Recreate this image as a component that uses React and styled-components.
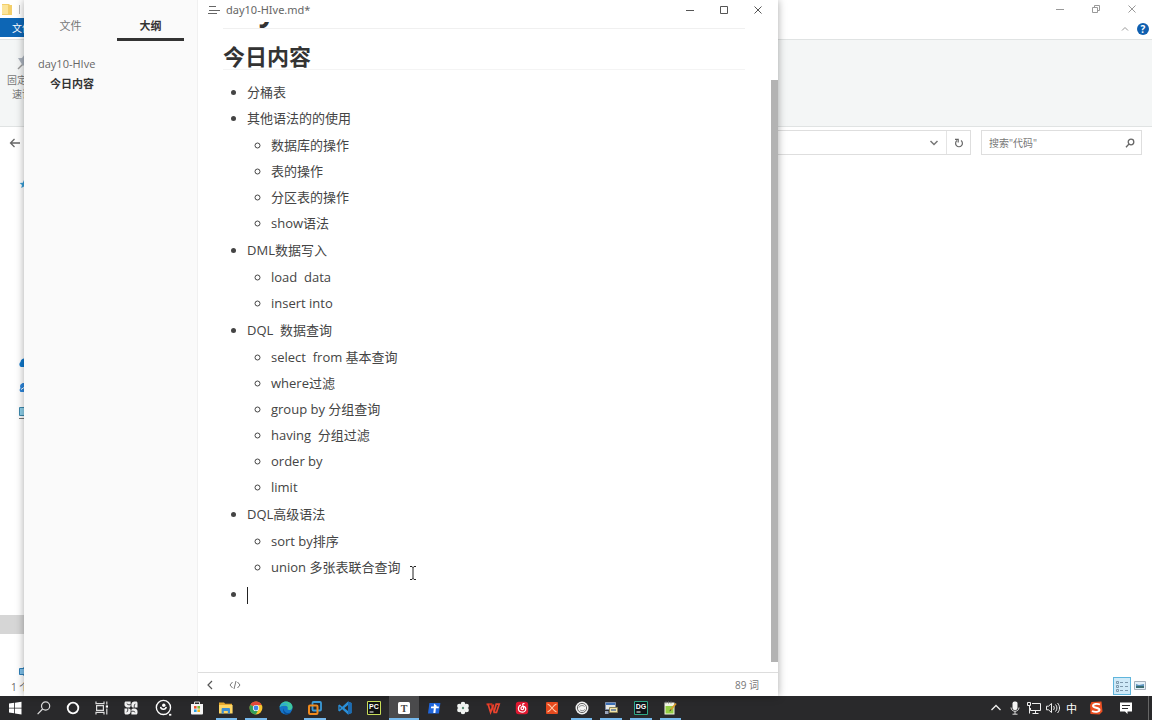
import React from 'react';
import styled, { createGlobalStyle } from 'styled-components';


const outline = [
    { text: '分桶表' },
    { text: '其他语法的的使用', children: ['数据库的操作', '表的操作', '分区表的操作', 'show语法'] },
    { text: 'DML数据写入', children: ['load  data', 'insert into'] },
    {
        text: 'DQL  数据查询',
        children: ['select  from 基本查询', 'where过滤', 'group by 分组查询', 'having  分组过滤', 'order by', 'limit']
    },
    { text: 'DQL高级语法', children: ['sort by排序', 'union 多张表联合查询'] },
];

// Iconos de la barra de tareas
const Icon = ({ children, size = 16 }) => (
    <svg width={size} height={size} viewBox="0 0 16 16" fill="none" aria-hidden="true">{children}</svg>
);

const systemApps = [
    {
        name: 'Start',
        icon: <Icon><path fill="#fff" d="M2 3.6l5.2-.8v4.9H2zM8 2.7l6.5-1v6H8zM2 8.5h5.2v4.8L2 12.6zM8 8.5h6.5v6L8 13.5z" /></Icon>
    },
    {
        name: 'Search',
        icon: <Icon><g stroke="#ddd" strokeWidth="1.2"><circle cx="9.6" cy="6" r="4.1" /><path d="M6.6 9L1.6 14.2" /></g></Icon>
    },
    {
        name: 'Cortana',
        icon: <Icon><circle cx="8" cy="8" r="5.3" stroke="#fff" strokeWidth="1.8" /></Icon>
    },
    {
        name: 'Task view',
        icon: (
            <Icon>
                <g stroke="#ddd" strokeWidth="1.2">
                    <path d="M2 1.6v2h8v-2M2 14.4v-2h8v2M2.6 5.6h6.8v4.8H2.6zM12.8 1.6v3M12.8 8.6v5.8" />
                </g>
                <path fill="#fff" d="M11.8 5.4h2.2v2.2h-2.2z" />
            </Icon>
        )
    },
    {
        name: 'Widgets',
        icon: (
            <Icon>
                <g fill="#f2f2f2">
                    <path d="M1.5 3c0-.9.6-1.500 1.500-1.500h4.600v4.300c0 1-.8 1.800-1.800 1.800H4.500c-1.800 0-3-1.400-3-3z" />
                    <path d="M13 1.500c.9 0 1.500.6 1.500 1.500v4.600h-4.300c-1 0-1.800-.8-1.800-1.800V4.500c0-1.800 1.400-3 3-3z" />
                    <path d="M3 14.500c-.9 0-1.500-.6-1.500-1.500V8.400h4.300c1 0 1.800.8 1.800 1.800v1.300c0 1.800-1.400 3-3 3z" />
                    <path d="M14.500 13c0 .9-.6 1.500-1.500 1.500H8.400v-4.300c0-1 .8-1.800 1.800-1.800h1.300c1.800 0 3 1.400 3 3z" />
                </g>
                <path d="M3.800 3.600c1 1.200 2.400 1.400 3.800.9M12.400 3.800c-1.200 1-1.400 2.400-.9 3.800M12.200 12.400c-1-1.200-2.400-1.400-3.800-.9M3.600 12.200c1.200-1 1.400-2.400.9-3.800" stroke="#2a2a2c" />
            </Icon>
        )
    },
];

const pinnedApps = [
    {
        name: 'Store',
        icon: (
            <Icon>
                <path d="M5.5 4V2h5v2" stroke="#ddd" />
                <path fill="#f4f4f4" d="M2 4h12v9.5a1 1 0 0 1-1 1H3a1 1 0 0 1-1-1z" />
                <path fill="#e8502d" d="M5 6h2.6v2.6H5z" /><path fill="#7cb82f" d="M8.4 6H11v2.6H8.4z" />
                <path fill="#2aa3e4" d="M5 9.4h2.6V12H5z" /><path fill="#f5b51b" d="M8.4 9.4H11V12H8.4z" />
            </Icon>
        )
    },
    {
        name: 'Explorer', running: true,
        icon: (
            <Icon>
                <path fill="#e6a92f" d="M1 2.5h5l1.2 1.3H14v3H1z" />
                <path fill="#ffd766" d="M1 5h13.6v8.5H1z" />
                <path fill="#3f8fd2" d="M3.6 13.5V9.2c0-.7.5-1.2 1.2-1.2h6c.7 0 1.2.5 1.2 1.2v4.3H9.8v-2.4h-4v2.4z" />
            </Icon>
        )
    },
    {
        name: 'Chrome', running: true,
        icon: (
            <Icon>
                <circle cx="8" cy="8" r="6.4" fill="#f7c530" />
                <path fill="#e2493b" d="M8 8L2.4 4.8A6.4 6.4 0 0 1 13.6 4.9H8z" />
                <path fill="#34a05a" d="M2.4 4.8A6.4 6.4 0 0 0 7.8 14.4L10.6 9.6 8 8z" />
                <circle cx="8" cy="8" r="3.1" fill="#fff" /><circle cx="8" cy="8" r="2.4" fill="#4285e8" />
            </Icon>
        )
    },
    {
        name: 'Edge',
        icon: (
            <Icon>
                <circle cx="8" cy="8" r="6.5" fill="#1474c8" />
                <path fill="#3dc7a0" d="M1.6 7.2C2.2 3.8 4.8 1.5 8 1.5c3.8 0 6.5 2.5 6.5 5.4 0 2-1.5 3.1-3.3 3.1-1.3 0-2-.5-1.6-1.2.8-1.6-.4-3.1-2.3-3.1-2.4 0-4.3.4-5.7 1.5z" />
                <path fill="#2ba6df" d="M1.6 7.2C2.4 4.4 4.6 3 7 3.2c2 .1 3 1.200 3 2.200C8.200 3.800 4 4.800 1.600 7.200z" />
                <path fill="#0b4f96" d="M5.800 8.200c-.3 2.600 1.400 4.800 4.500 4.800 1.200 0 2.200-.3 3-.8-1.200 1.600-3 2.300-5.300 2.300-2.400-.8-3.500-3.800-2.200-6.300z" />
            </Icon>
        )
    },
    {
        name: 'VMware', running: true,
        icon: (
            <Icon>
                <rect x="5.5" y="2" width="8.500" height="8.500" rx="1" stroke="#3b9bd8" strokeWidth="1.800" />
                <rect x="2" y="5.500" width="8.500" height="8.500" rx="1" stroke="#f08a1d" strokeWidth="2" />
            </Icon>
        )
    },
    {
        name: 'VS Code',
        icon: (
            <Icon>
                <path fill="#2a8fd8" d="M11 1.400l3.600 1.700v9.800L11 14.600 5.200 9.300 2.500 11.400 1.300 10.700V5.300l1.200-.7 2.700 2.100zM11 5L7.300 8 11 11zM2.600 6.600v2.800L4 8z" />
                <path fill="#1c6cb4" d="M11 1.400l3.600 1.700v9.800L11 14.600z" />
            </Icon>
        )
    },
    {
        name: 'PyCharm',
        icon: (
            <Icon>
                <path fill="#111" stroke="#c8dd58" d="M1.500 1.500h13v13h-13z" />
                <text x="3" y="8.600" fontFamily="Liberation Sans, sans-serif" fontSize="7" fontWeight="700" fill="#fff">PC</text>
                <path d="M3.500 12h4" stroke="#fff" />
            </Icon>
        )
    },
    {
        name: 'Typora', running: true, active: true,
        icon: (
            <Icon>
                <rect x="2" y="2" width="12" height="12" rx="1.500" fill="#fff" />
                <text x="8" y="11.500" textAnchor="middle" fontFamily="Liberation Serif, serif" fontSize="10" fontWeight="700" fill="#444">T</text>
            </Icon>
        )
    },
    {
        name: 'Teambition',
        icon: (
            <Icon>
                <path fill="#1f66dd" d="M3.400 3h11l-1.500 10.500H2z" />
                <path fill="#fff" d="M8 3.400l2.600 2v1.200h2.200v1.700H9.900l-.5 4.700H7.300l.5-4.700H4.900l.3-1.700h2.600z" />
            </Icon>
        )
    },
    {
        name: 'Flower',
        icon: (
            <Icon>
                <g fill="#f2f5f3">
                    <circle cx="8" cy="4" r="2.300" /><circle cx="11.600" cy="6" r="2.300" /><circle cx="11.600" cy="10" r="2.300" />
                    <circle cx="8" cy="12" r="2.300" /><circle cx="4.400" cy="10" r="2.300" /><circle cx="4.400" cy="6" r="2.300" />
                    <circle cx="8" cy="8" r="3" />
                </g>
                <circle cx="8" cy="8" r="1.200" fill="#5a8c74" />
            </Icon>
        )
    },
    {
        name: 'WPS',
        icon: (
            <Icon>
                <path d="M1.500 4.200h5L9 11.500" stroke="#c9301f" strokeWidth="2" />
                <path d="M3 4l2.600 8.400L8.600 4.500M8.800 12.400L11.200 4.200h3L11.500 12.400H8.400" stroke="#e8442f" strokeWidth="1.700" />
            </Icon>
        )
    },
    {
        name: 'Music',
        icon: (
            <Icon>
                <rect x="1.800" y="1.800" width="12.400" height="12.400" rx="3" fill="#e01830" />
                <path d="M10.500 3.600c-1.200-.4-2 .3-1.700 1.400l.8 3c.4 2-2.600 2.200-2.600.2 0-2.600 4.800-2.400 4.800.8 0 4.200-7.400 4.200-7.400-.4C4.400 6.800 5.400 5.500 7 5" stroke="#fff" strokeWidth="1.200" />
            </Icon>
        )
    },
    {
        name: 'XMind',
        icon: (
            <Icon>
                <rect x="2" y="2" width="12" height="12" rx="1" fill="#e64a1e" />
                <path d="M3.500 4C7 5 9 11 12.500 12M12.500 4C9 5 7 11 3.500 12" stroke="#ffc9a8" strokeWidth="1.200" />
            </Icon>
        )
    },
    {
        name: 'OBS', running: true,
        icon: (
            <Icon>
                <circle cx="8" cy="8" r="6.500" fill="#f3f3f3" />
                <circle cx="8" cy="8" r="4.600" stroke="#555" strokeWidth=".9" />
                <path d="M5 7.500C5.500 5.500 9 4.800 10.500 6.500M10.800 9.500c-1.400 1.600-3.500 1.500-4.600.500" stroke="#666" strokeWidth=".8" />
            </Icon>
        )
    },
    {
        name: 'Remote', running: true,
        icon: (
            <Icon>
                <path fill="#e8e8e2" stroke="#7d8da8" d="M2.500 2.500h10v7h-10z" /><path d="M3 4h9" stroke="#3c6fb5" strokeWidth="2" />
                <path fill="#f0e3a8" stroke="#8c8457" d="M6.500 7.500h8v5h-8z" /><path d="M8 10h5" stroke="#55719a" strokeWidth="1.500" />
                <path fill="#98a4b8" d="M2 11h3.500v3H2z" />
            </Icon>
        )
    },
    {
        name: 'DataGrip', running: true,
        icon: (
            <Icon>
                <path fill="#101418" stroke="#2fa987" d="M1.500 1.500h13v13h-13z" />
                <text x="2.700" y="8.600" fontFamily="Liberation Sans, sans-serif" fontSize="7" fontWeight="700" fill="#fff">DG</text>
                <path d="M3.500 12h4" stroke="#fff" />
            </Icon>
        )
    },
    {
        name: 'Notepad++', running: true,
        icon: (
            <Icon>
                <path fill="#f1f4e4" d="M2.500 2.500h10v12h-10z" /><path fill="#94cf45" d="M3.500 6h8v7.500h-8z" />
                <path d="M4 1.500v2M6.500 1.500v2M9 1.500v2" stroke="#777" />
                <path d="M14 3.500L8.500 10" stroke="#d79a2c" strokeWidth="1.800" /><path d="M8.800 9.500L7.800 11.200" stroke="#333" />
            </Icon>
        )
    },
];

const trayItems = [
    { name: 'Hidden icons', icon: <Icon><path d="M3.500 10L8 5.500l4.500 4.500" stroke="#eee" strokeWidth="1.300" /></Icon> },
    {
        name: 'Microphone',
        icon: <Icon><rect x="5.500" y="1.500" width="5" height="8.500" rx="2" fill="#f3f3f3" /><path d="M4 7.500c0 5 8 5 8 0M8 11v3M5.500 14.200h5" stroke="#ddd" /></Icon>
    },
    {
        name: 'Network',
        icon: <Icon><path d="M6 3.500h8.500v7H4.500V8M9.500 10.500v3M6.500 13.500h6M1.500 2.500h3v3h-3zM3.500 5.500v8" stroke="#eee" /></Icon>
    },
    {
        name: 'Volume',
        icon: <Icon><path d="M1.500 6.200h2L6.500 3.500v9L3.500 9.800h-2zM8.500 6c1 1.200 1 2.800 0 4M10.500 4.500c1.900 2 1.900 5 0 7M12.500 3c2.700 3 2.700 7 0 10" stroke="#eee" /></Icon>
    },
];

const Win = ({ kind, color = '#555' }) => (
    <svg width="12" height="12" viewBox="0 0 12 12" fill="none" stroke={color} aria-hidden="true">
        {kind === 'min' && <path d="M2 6.500h8" />}
        {kind === 'max' && <path d="M2.500 2.500h7v7h-7z" />}
        {kind === 'restore' && <path d="M2.500 4.500h5v5h-5zM4.500 4.500v-2h5v5h-2" />}
        {kind === 'close' && <path d="M2.500 2.500l7 7M9.500 2.500l-7 7" />}
    </svg>
);


const App = () => (
    <>
        <GlobalStyle />
        <Desktop>
            <Screen>
                <Explorer>
                    <TitleBar>
                        <svg width="12" height="12" viewBox="0 0 12 12" aria-hidden="true">
                            <path fill="#f3cf6b" d="M1 1h7l1 1h2v10H1z" /><path fill="#fbe49a" d="M1 2h6v9H1z" />
                        </svg>
                        <Divider />
                        <WindowButtons $gap="24px">
                            <PlainButton aria-label="Minimize"><Win kind="min" color="#999" /></PlainButton>
                            <PlainButton aria-label="Restore"><Win kind="restore" color="#999" /></PlainButton>
                            <PlainButton aria-label="Close"><Win kind="close" color="#999" /></PlainButton>
                        </WindowButtons>
                    </TitleBar>
                    <RibbonTabs>
                        <FileTab>文件</FileTab>
                        <RibbonHelp>
                            <PlainButton aria-label="Collapse">
                                <svg width="8" height="6" viewBox="0 0 8 6" fill="none" stroke="#999" aria-hidden="true"><path d="M1 4.500l3-3 3 3" /></svg>
                            </PlainButton>
                            <HelpButton>?</HelpButton>
                        </RibbonHelp>
                    </RibbonTabs>
                    <Ribbon>
                        <PinButton>
                            <svg width="20" height="18" viewBox="0 0 20 18" fill="none" aria-hidden="true">
                                <path d="M1 16l5-5" stroke="#999" strokeWidth="1.500" />
                                <path d="M1 5l5 8 4-4 4-1-6-7-3 4z" fill="#aab2bd" />
                            </svg>
                            <span>固定到快<br />速访问</span>
                        </PinButton>
                    </Ribbon>
                    <AddressRow>
                        <PlainButton aria-label="Back">
                            <svg width="12" height="10" viewBox="0 0 12 10" fill="none" stroke="#666" strokeWidth="1.300" aria-hidden="true"><path d="M11 5H1.500M5.500 1l-4 4 4 4" /></svg>
                        </PlainButton>
                        <AddressBox>
                            <PlainButton aria-label="History">
                                <svg width="10" height="8" viewBox="0 0 10 8" fill="none" stroke="#777" strokeWidth="1.500" aria-hidden="true"><path d="M1.500 2L5 5.500 8.500 2" /></svg>
                            </PlainButton>
                            <RefreshButton aria-label="Refresh">
                                <svg width="10" height="10" viewBox="0 0 10 10" fill="none" stroke="#666" strokeWidth="1.200" aria-hidden="true"><path d="M7 2.600A3.400 3.400 0 1 1 3 2.600M1 1.300h3.200v3.200" /></svg>
                            </RefreshButton>
                        </AddressBox>
                        <SearchBox>
                            <input aria-label="搜索" placeholder={'搜索"代码"'} />
                            <svg width="10" height="10" viewBox="0 0 10 10" fill="none" stroke="#666" strokeWidth="1.300" aria-hidden="true"><circle cx="6" cy="4" r="2.800" /><path d="M4 6L1 9.200" /></svg>
                        </SearchBox>
                    </AddressRow>
                    <NavPane>
                        <NavRow $top="16px">
                            <svg width="10" height="10" viewBox="0 0 10 10" aria-hidden="true"><path fill="#3a9fd8" d="M5 1l1.200 2.800L9.500 4 7 6l.8 3L5 7.400 2.200 9 3 6 .5 4l3.300-.2z" /></svg>
                        </NavRow>
                        <NavRow $top="160px">
                            <svg width="14" height="10" viewBox="0 0 14 10" aria-hidden="true"><path fill="#0f78cc" d="M2 9a3 3 0 0 1-.5-5A4 4 0 0 1 9 2.500 3.500 3.500 0 0 1 12 9z" /></svg>
                        </NavRow>
                        <NavRow $top="6px">
                            <svg width="14" height="10" viewBox="0 0 14 10" aria-hidden="true"><path fill="#2c86dc" d="M1.500 9a3 3 0 0 1 0-4A3 3 0 0 1 8 2 3.500 3.500 0 0 1 12 9z" /><path d="M2 6.500l3-2" stroke="#fff" /></svg>
                        </NavRow>
                        <NavRow $top="6px">
                            <svg width="14" height="12" viewBox="0 0 14 12" aria-hidden="true"><path fill="#8fd0ea" stroke="#3c88ad" d="M.5.5h13v8H.5z" /><path d="M0 11.500h14" stroke="#777" /></svg>
                        </NavRow>
                        <NavRow $top="193px" $selected />
                        <NavRow $top="28px">
                            <svg width="14" height="10" viewBox="0 0 14 10" aria-hidden="true"><path fill="#7fc0ea" stroke="#2f7fb8" d="M.5 1.500h8v6h-8zM4.500.5h9v8h-9" /></svg>
                        </NavRow>
                    </NavPane>
                    <ExplorerStatus>
                        <span>1 个项目</span>
                        <ViewButtons>
                            <ViewButton $selected aria-label="Details">
                                <svg width="14" height="14" viewBox="0 0 14 14" fill="none" aria-hidden="true">
                                    <path d="M1.500 2.500h2v2h-2zM1.500 6.500h2v2h-2zM1.500 10.500h2v2h-2zM5 3.500h3M5 7.500h3M5 11.500h3M10 3.500h3M10 7.500h3M10 11.500h3" stroke="#7d98ac" />
                                </svg>
                            </ViewButton>
                            <ViewButton aria-label="Large icons">
                                <svg width="12" height="10" viewBox="0 0 12 10" aria-hidden="true">
                                    <path fill="#e4f0f9" stroke="#a5b0bb" d="M.5.5h11v8H.5z" /><path fill="#5b93bd" d="M2 3l3 1 5-1v2H2z" /><path fill="#3b6d72" d="M2 5h8v2H2z" />
                                </svg>
                            </ViewButton>
                        </ViewButtons>
                    </ExplorerStatus>
                </Explorer>

                <Editor>
                    <Sidebar>
                        <Tabs>
                            <Tab>文件</Tab>
                            <Tab $active>大纲</Tab>
                        </Tabs>
                        <OutlineLink href="#day10">day10-HIve</OutlineLink>
                        <OutlineLink href="#today" $level={1}>今日内容</OutlineLink>
                    </Sidebar>
                    <Main>
                        <EditorTitle>
                            <PlainButton aria-label="Outline">
                                <svg width="12" height="10" viewBox="0 0 12 10" stroke="#666" aria-hidden="true"><path d="M1 1.500h7M1 5.500h11M0 8.500h9" /></svg>
                            </PlainButton>
                            <span>day10-HIve.md*</span>
                            <WindowButtons $gap="22px">
                                <PlainButton aria-label="Minimize"><Win kind="min" /></PlainButton>
                                <PlainButton aria-label="Maximize"><Win kind="max" /></PlainButton>
                                <PlainButton aria-label="Close"><Win kind="close" /></PlainButton>
                            </WindowButtons>
                        </EditorTitle>
                        <Scroller>
                            <Article>
                                <DocTitle id="day10">day10-HIve</DocTitle>
                                <Heading id="today">今日内容</Heading>
                                <List>
                                    {outline.map((item) => (
                                        <li key={item.text}>
                                            {item.text}
                                            {item.children && (
                                                <SubList>
                                                    {item.children.map((child) => <li key={child}>{child}</li>)}
                                                </SubList>
                                            )}
                                        </li>
                                    ))}
                                    <li><Caret /></li>
                                </List>
                            </Article>
                            <ScrollTrack><ScrollThumb /></ScrollTrack>
                        </Scroller>
                        <EditorStatus>
                            <PlainButton aria-label="Hide sidebar">
                                <svg width="8" height="10" viewBox="0 0 8 10" fill="none" stroke="#555" strokeWidth="1.200" aria-hidden="true"><path d="M6 1L2 5l4 4" /></svg>
                            </PlainButton>
                            <PlainButton aria-label="Source code">
                                <svg width="12" height="10" viewBox="0 0 12 10" fill="none" stroke="#777" aria-hidden="true"><path d="M3.500 2L1 5l2.500 3M8.500 2L11 5 8.500 8M7 1L5 9" /></svg>
                            </PlainButton>
                            <WordCount>89 词</WordCount>
                        </EditorStatus>
                    </Main>
                </Editor>

                <Pointer width="8" height="14" viewBox="0 0 8 14" fill="none" stroke="#222" aria-hidden="true">
                    <path d="M1 .5h2l1 1 1-1h2M4 1v12M1 13.500h2l1-1 1 1h2" />
                </Pointer>
            </Screen>

            <Taskbar>
                {systemApps.map((app) => <TaskButton key={app.name} aria-label={app.name}>{app.icon}</TaskButton>)}
                <TaskButton $wide aria-label="Quick search">
                    <Icon size={18}>
                        <circle cx="7.500" cy="7.500" r="6.300" stroke="#fff" strokeWidth="1.200" />
                        <path d="M12.500 14h2" stroke="#fff" strokeWidth="1.600" />
                        <path d="M5 7c.2 2.600 4.600 2.800 5 0" stroke="#fff" strokeWidth="1.300" />
                        <circle cx="7.800" cy="5.600" r="1.500" fill="#fff" />
                    </Icon>
                </TaskButton>
                <Pinned>
                    {pinnedApps.map((app) => (
                        <PinnedButton key={app.name} aria-label={app.name} $running={app.running} $active={app.active}>
                            {app.icon}
                        </PinnedButton>
                    ))}
                </Pinned>
                <Tray>
                    {trayItems.map((item) => <TrayButton key={item.name} aria-label={item.name}>{item.icon}</TrayButton>)}
                    <TrayButton>中</TrayButton>
                    <TrayButton $wide aria-label="Sogou">
                        <Icon>
                            <path fill="#ea4f22" d="M3.500 2l10-.5 1 10-3 3-9-.5L2 5z" />
                            <path d="M12 4.500C9 3.200 5 4 5 6s6.500 1.500 6.500 3.800S7 12.500 4 11" stroke="#fff" strokeWidth="1.900" />
                        </Icon>
                    </TrayButton>
                    <TrayButton $wide aria-label="Notifications">
                        <Icon><path fill="#fff" d="M2 2.500h12v9H9.500V14L7 11.500H2z" /><path d="M4 5.500h8M4 8.500h6" stroke="#2a2a2c" /></Icon>
                    </TrayButton>
                    <ShowDesktop aria-label="Show desktop" />
                </Tray>
            </Taskbar>
        </Desktop>
    </>
);

export default App;

const GlobalStyle = createGlobalStyle`
    body {
        margin: 0;
        background: #fff;
        font-family: 'Open Sans', 'Noto Sans CJK SC', sans-serif;
    }

    *, *::before, *::after {
        box-sizing: border-box;
    }

    button, input {
        font: inherit;
        color: inherit;
    }
`;

const Desktop = styled.div`
    display: flex;
    flex-direction: column;
    height: 100vh;
    overflow: hidden;
`;

const Screen = styled.div`
    position: relative;
    flex: 1;
    min-height: 0;
    display: flex;
`;

const PlainButton = styled.button`
    display: flex;
    align-items: center;
    justify-content: center;
    padding: 0;
    border: 0;
    background: none;
`;

const WindowButtons = styled.div`
    display: flex;
    gap: ${({ $gap }) => $gap};
    margin-left: auto;
`;

/* Explorador */
const Explorer = styled.section`
    flex: 1;
    display: flex;
    flex-direction: column;
    min-width: 0;
    background: #fff;
    color: #666;
    font-size: 10px;
`;

const TitleBar = styled.header`
    display: flex;
    align-items: center;
    gap: 6px;
    height: 18px;
    padding: 0 14px 0 1px;
`;

const Divider = styled.span`
    width: 1px;
    height: 9px;
    background: #bbb;
`;

const RibbonTabs = styled.div`
    display: flex;
    justify-content: space-between;
    height: 21px;
`;

const FileTab = styled.button`
    height: 19px;
    padding: 0 12px;
    border: 0;
    background: #0d66b5;
    color: #fff;
`;

const RibbonHelp = styled.div`
    display: flex;
    align-items: center;
    gap: 8px;
    padding-right: 3px;
`;

const HelpButton = styled.button`
    width: 12px;
    height: 12px;
    padding: 0;
    border: 0;
    border-radius: 50%;
    background: #0f5fb0;
    color: #fff;
    font-weight: 700;
    line-height: 12px;
`;

const Ribbon = styled.div`
    height: 88px;
    padding: 13px 7px;
    border: solid #e0e3e3;
    border-width: 1px 0;
    background: #f4f6f6;
`;

const PinButton = styled(PlainButton)`
    flex-direction: column;
    gap: 2px;
    line-height: 14px;
    color: #777;
`;

const AddressRow = styled.div`
    display: flex;
    gap: 10px;
    padding: 3px 10px 3px 9px;
`;

const AddressBox = styled.div`
    flex: 1;
    display: flex;
    justify-content: flex-end;
    gap: 7px;
    height: 25px;
    margin-left: 60px;
    border: 1px solid #dedede;
`;

const RefreshButton = styled(PlainButton)`
    width: 24px;
    border-left: 1px solid #e4e4e4;
`;

const SearchBox = styled.label`
    display: flex;
    align-items: center;
    width: 161px;
    height: 25px;
    padding: 0 6px 0 7px;
    border: 1px solid #dedede;

    input {
        flex: 1;
        min-width: 0;
        padding: 0;
        border: 0;
        outline: 0;
        background: none;
    }

    input::placeholder {
        color: #777;
    }
`;

const NavPane = styled.nav`
    flex: 1;
    min-height: 0;
    width: 120px;
`;

const NavRow = styled.div`
    display: flex;
    align-items: center;
    height: 19px;
    margin-top: ${({ $top }) => $top};
    padding-left: 19px;
    background: ${({ $selected }) => ($selected ? '#d6d6d6' : 'none')};
`;

const ExplorerStatus = styled.footer`
    display: flex;
    align-items: center;
    justify-content: space-between;
    height: 20px;
    padding: 0 3px 0 11px;
`;

const ViewButtons = styled.div`
    display: flex;
`;

const ViewButton = styled(PlainButton)`
    width: 18px;
    height: 18px;
    border: 1px solid ${({ $selected }) => ($selected ? '#5fb5dc' : 'transparent')};
    background: ${({ $selected }) => ($selected ? '#cfeaf8' : 'none')};
`;

/* Ventana del editor, encima del explorador */
const Editor = styled.section`
    position: absolute;
    top: 0;
    bottom: 0;
    left: 24px;
    right: 374px;
    display: flex;
    background: #fff;
    box-shadow: 0 0 8px rgba(0, 0, 0, 0.35);
`;

const Sidebar = styled.aside`
    display: flex;
    flex-direction: column;
    width: 174px;
    border-right: 1px solid #f0f0f0;
    background: #fafafa;
    color: #555;
    font-size: 11px;
`;

const Tabs = styled.div`
    display: flex;
    gap: 13px;
    padding: 11px 13px 13px;
`;

const Tab = styled.button`
    flex: 1;
    height: 30px;
    padding: 0;
    border: 0;
    border-bottom: 3px solid ${({ $active }) => ($active ? '#333' : 'transparent')};
    background: none;
    color: ${({ $active }) => ($active ? '#333' : '#777')};
    font-weight: ${({ $active }) => ($active ? 700 : 400)};
`;

const OutlineLink = styled.a`
    padding-left: ${({ $level }) => ($level ? '26px' : '14px')};
    color: ${({ $level }) => ($level ? '#333' : '#666')};
    font-weight: ${({ $level }) => ($level ? 700 : 400)};
    line-height: 20px;
    text-decoration: none;
`;

const Main = styled.main`
    flex: 1;
    display: flex;
    flex-direction: column;
    min-width: 0;
`;

const EditorTitle = styled.header`
    display: flex;
    align-items: center;
    gap: 6px;
    height: 22px;
    padding: 0 14px 2px 10px;
    color: #666;
    font-family: 'Noto Sans', sans-serif;
    font-size: 11px;
    line-height: 14px;
`;

const Scroller = styled.div`
    flex: 1;
    display: flex;
    min-height: 0;
`;

const Article = styled.article`
    flex: 1;
    padding: 0 26px 0 25px;
    color: #444;
    font-size: 13px;
    line-height: 26px;
    white-space: pre-wrap;
`;

const DocTitle = styled.h1`
    display: flex;
    align-items: flex-end;
    height: 7px;
    margin: 0;
    overflow: hidden;
    border-bottom: 1px solid #f0f0f0;
    color: #333;
    font-size: 29px;
    line-height: 36px;
`;

const Heading = styled.h2`
    margin: 15px 0 9px;
    border-bottom: 1px solid #f4f4f4;
    color: #333;
    font-size: 22px;
    line-height: 25px;
`;

const List = styled.ul`
    margin: 0;
    padding-left: 24px;
`;

const SubList = styled.ul`
    margin: 1px 0;
    padding-left: 24px;
`;

const Caret = styled.span`
    display: inline-block;
    width: 1px;
    height: 17px;
    background: #222;
    vertical-align: middle;
`;

const ScrollTrack = styled.div`
    display: flex;
    width: 7px;
    padding: 58px 0 10px;
`;

const ScrollThumb = styled.div`
    flex: 1;
    background: #b3b3b3;
`;

const EditorStatus = styled.footer`
    display: flex;
    align-items: center;
    gap: 15px;
    height: 24px;
    padding: 0 19px 0 8px;
    border-top: 1px solid #ddd;
`;

const WordCount = styled.span`
    margin-left: auto;
    color: #777;
    font-size: 10px;
`;

const Pointer = styled.svg`
    position: absolute;
    top: 566px;
    left: 409px;
`;

/* Barra de tareas */
const Taskbar = styled.footer`
    display: flex;
    height: 24px;
    background: #29292b;
    color: #fff;
`;

const TaskButton = styled(PlainButton)`
    width: ${({ $wide }) => ($wide ? '37px' : '29px')};
`;

const Pinned = styled.div`
    flex: 0 1 503px;
    display: flex;
`;

const PinnedButton = styled(PlainButton)`
    position: relative;
    flex: 1;
    background: ${({ $active }) => ($active ? '#4a4a4c' : 'none')};

    &::after {
        content: '';
        display: ${({ $running }) => ($running ? 'block' : 'none')};
        position: absolute;
        bottom: 0;
        left: ${({ $active }) => ($active ? '0' : '4px')};
        right: ${({ $active }) => ($active ? '0' : '4px')};
        height: 2px;
        background: #76b9ed;
    }
`;

const Tray = styled.div`
    display: flex;
    margin-left: auto;
    font-size: 11px;
`;

const TrayButton = styled(PlainButton)`
    width: ${({ $wide }) => ($wide ? '30px' : '19px')};
`;

const ShowDesktop = styled.button`
    width: 4px;
    margin-left: 7px;
    padding: 0;
    border: 0;
    border-left: 1px solid #666;
    background: none;
`;
